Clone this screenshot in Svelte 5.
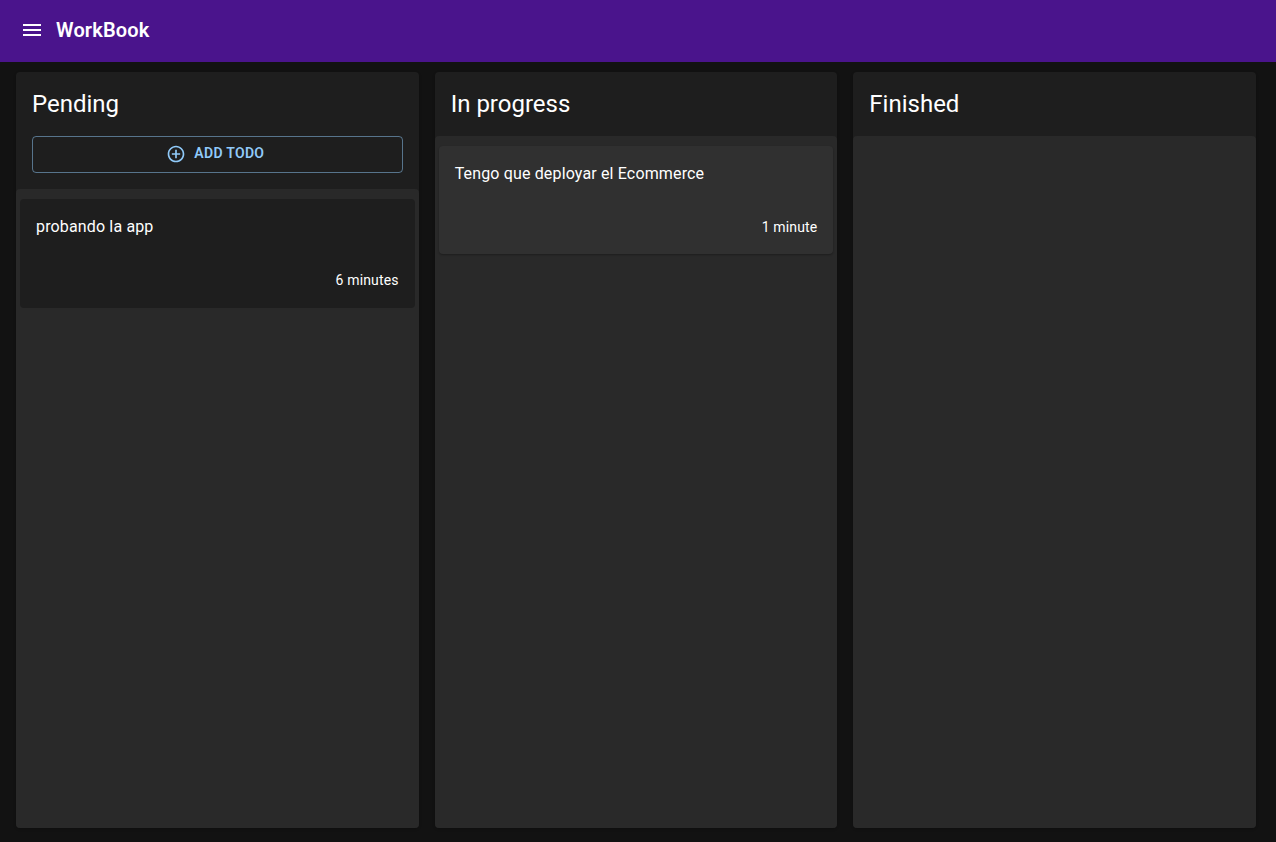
<script>
  const columns = [
    { title: 'Pending', canAdd: true, entries: [{ text: 'probando la app', age: '6 minutes', dark: true }] },
    { title: 'In progress', entries: [{ text: 'Tengo que deployar el Ecommerce', age: '1 minute' }] },
    { title: 'Finished', entries: [] }
  ];
</script>

<div class="page">
  <header>
    <button class="menu" aria-label="Menu">
      <svg viewBox="0 0 24 24" width="24" height="24"><path d="M3 18h18v-2H3v2zm0-5h18v-2H3v2zm0-7v2h18V6H3z" /></svg>
    </button>
    <h1>WorkBook</h1>
  </header>
  <main>
    {#each columns as column}
      <section>
        <h2>{column.title}</h2>
        {#if column.canAdd}
          <button class="add">
            <svg viewBox="0 0 24 24" width="20" height="20"><path d="M13 7h-2v4H7v2h4v4h2v-4h4v-2h-4V7zm-1-5C6.48 2 2 6.48 2 12s4.480 10 10 10 10-4.480 10-10S17.520 2 12 2zm0 18c-4.410 0-8-3.590-8-8s3.590-8 8-8 8 3.590 8 8-3.590 8-8 8z" /></svg>
            <span>Add todo</span>
          </button>
        {/if}
        <div class="list">
          {#each column.entries as entry}
            <article class:dark={entry.dark}>
              <p>{entry.text}</p>
              <small>{entry.age}</small>
            </article>
          {/each}
        </div>
      </section>
    {/each}
  </main>
</div>

<style>
  .page {
    height: 842px;
    display: flex;
    flex-direction: column;
    background: #121212;
    color: #fff;
    font-family: Roboto, sans-serif;
    box-sizing: border-box;
    overflow: hidden;
  }
  header {
    height: 62px;
    flex: none;
    display: flex;
    align-items: center;
    gap: 12px;
    padding: 0 20px 2px;
    box-sizing: border-box;
    background: #4a148c;
  }
  button {
    font-family: inherit;
    margin: 0;
    background: none;
  }
  svg {
    display: block;
    fill: currentColor;
  }
  .menu {
    border: 0;
    padding: 0;
    color: #fff;
  }
  h1 {
    margin: 0;
    font-size: 20px;
    line-height: 32px;
    font-weight: 600;
    letter-spacing: 0.0075em;
  }
  main {
    flex: 1;
    display: grid;
    grid-template-columns: repeat(3, 1fr);
    gap: 16px;
    padding: 10px 20px 14px 16px;
  }
  section {
    display: flex;
    flex-direction: column;
    border-radius: 4px;
    background: #1e1e1e;
    box-shadow: 0 1px 3px rgba(0, 0, 0, 0.2);
  }
  h2 {
    margin: 16px;
    font-size: 24px;
    line-height: 32px;
    font-weight: 400;
  }
  .add {
    display: flex;
    align-items: center;
    justify-content: center;
    gap: 8px;
    height: 37px;
    margin: 0 16px 16px;
    padding: 0 19px 2px 15px;
    box-sizing: border-box;
    border: 1px solid rgba(144, 202, 249, 0.5);
    border-radius: 4px;
    color: #90caf9;
    font-size: 14px;
    font-weight: 600;
    letter-spacing: 0.3px;
    text-transform: uppercase;
  }
  .add span {
    padding-bottom: 1px;
  }
  .list {
    flex: 1;
    padding: 10px 4px;
    border-radius: 4px;
    background: #292929;
  }
  article {
    height: 108px;
    padding: 16px;
    box-sizing: border-box;
    display: flex;
    flex-direction: column;
    justify-content: space-between;
    border-radius: 4px;
    background: #303030;
    box-shadow: 0 1px 2px rgba(0, 0, 0, 0.3);
  }
  article.dark {
    height: 109px;
    padding-bottom: 17px;
    background: #1e1e1e;
    box-shadow: none;
  }
  p {
    margin: 0;
    font-size: 16px;
    line-height: 24px;
    letter-spacing: 0.00938em;
  }
  small {
    align-self: flex-end;
    font-size: 14px;
    line-height: 22px;
    letter-spacing: 0.01071em;
  }
</style>
